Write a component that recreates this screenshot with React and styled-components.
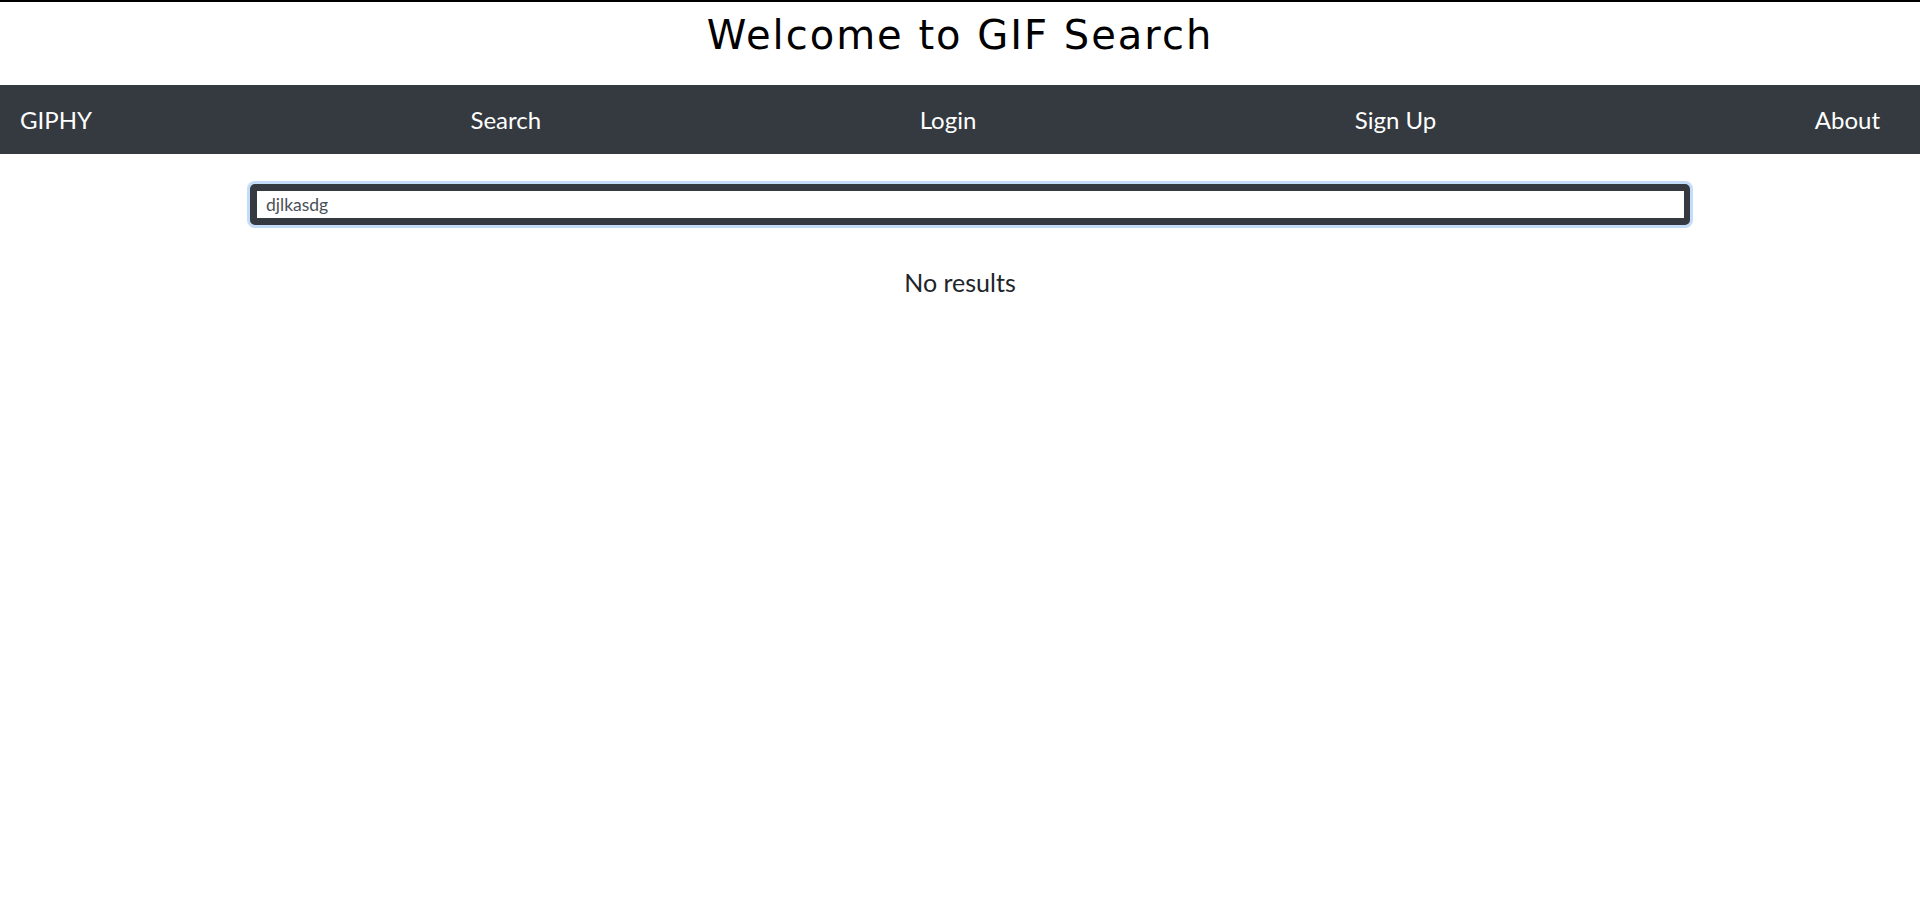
import React, { useState } from "react";
import styled, { createGlobalStyle } from "styled-components";

const GlobalStyle = createGlobalStyle`
  html, body {
    margin: 0;
    padding: 0;
    background: #ffffff;
  }
  body {
    border-top: 2px solid #000000;
    font-family: "Segoe UI", "Lato", "Noto Sans", sans-serif;
    color: #212529;
  }
  * { box-sizing: border-box; }
`;

const Page = styled.div`
  display: flex;
  flex-direction: column;
  min-height: 898px;
`;

const Title = styled.h1`
  margin: 0;
  height: 83px;
  padding-top: 9px;
  text-align: center;
  font-family: "Comic Sans MS", "DejaVu Sans", cursive;
  font-weight: 400;
  font-size: 40px;
  line-height: 48px;
  letter-spacing: 2px;
  color: #000000;
`;

const NavBar = styled.nav`
  display: flex;
  align-items: center;
  justify-content: space-between;
  height: 69px;
  padding: 0 40px 0 20px;
  background: #343a40;
`;

const NavLink = styled.a`
  color: #ffffff;
  font-size: 24px;
  line-height: 32px;
  text-decoration: none;
  cursor: pointer;
`;

const SearchForm = styled.form`
  display: flex;
  justify-content: center;
  padding: 30px 0 0 20px;
`;

const SearchInput = styled.input`
  width: 1440px;
  height: 41px;
  padding: 0 9px;
  border: 7px solid #343a40;
  border-right-width: 6px;
  border-radius: 5px;
  box-shadow: 0 0 0 3px #c3dcf7;
  outline: none;
  font-family: "Segoe UI", "Lato", "Noto Sans", sans-serif;
  font-size: 17.5px;
  color: #495057;
  background: #ffffff;
`;

const Message = styled.p`
  margin: 41px 0 0;
  text-align: center;
  font-size: 25px;
  line-height: 32px;
  color: #212529;
`;

export default function App() {
  const [query, setQuery] = useState("djlkasdg");
  return (
    <Page>
      <GlobalStyle />
      <Title>Welcome to GIF Search</Title>
      <NavBar>
        <NavLink>GIPHY</NavLink>
        <NavLink>Search</NavLink>
        <NavLink>Login</NavLink>
        <NavLink>Sign Up</NavLink>
        <NavLink>About</NavLink>
      </NavBar>
      <SearchForm onSubmit={(e) => e.preventDefault()}>
        <SearchInput value={query} onChange={(e) => setQuery(e.target.value)} />
      </SearchForm>
      <Message>No results</Message>
    </Page>
  );
}
